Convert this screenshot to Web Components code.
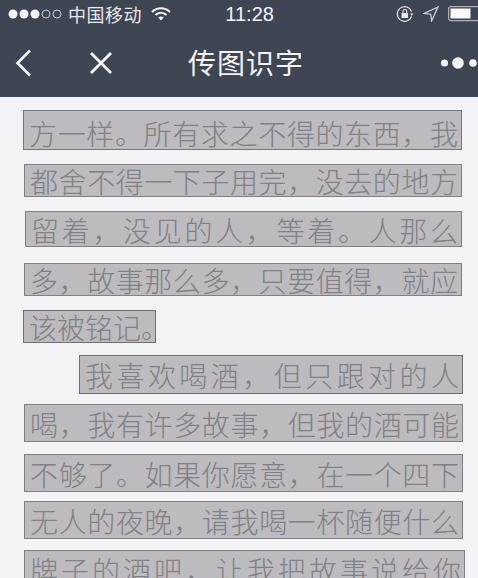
<!DOCTYPE html>
<html lang="zh">
<head>
<meta charset="utf-8">
<title>传图识字</title>
<style>
    html, body {
        margin: 0;
        height: 578px;
        overflow: hidden;
        background: #f3f2f7;
        font-family: "Noto Sans CJK SC", "Liberation Sans", sans-serif;
    }
</style>
</head>
<body>
<app-header></app-header>
<ocr-page>
    <ocr-line style="--w:439px;--h:40px;--x:23px;--t:13px;--d:3px;--b:#76767a">方一样。所有求之不得的东西&#xFF0C;我</ocr-line>
    <ocr-line style="--w:438px;--h:33px;--x:24px;--t:14px">都舍不得一下子用完&#xFF0C;没去的地方</ocr-line>
    <ocr-line style="--w:437px;--h:36px;--x:25px;--t:14px">留着&#xFF0C;没见的人&#xFF0C;等着。人那么</ocr-line>
    <ocr-line style="--w:438px;--h:33px;--x:24px;--t:16px">多&#xFF0C;故事那么多&#xFF0C;只要值得&#xFF0C;就应</ocr-line>
    <ocr-line short style="--w:133px;--h:33px;--x:23px;--t:14px;--b:#6f6f73">该被铭记。</ocr-line>
    <ocr-line style="--w:384px;--h:39px;--x:79px;--t:12px;--b:#6f6f73">我喜欢喝酒&#xFF0C;但只跟对的人</ocr-line>
    <ocr-line style="--w:439px;--h:38px;--x:24px;--t:10px">喝&#xFF0C;我有许多故事&#xFF0C;但我的酒可能</ocr-line>
    <ocr-line style="--w:439px;--h:38px;--x:24px;--t:12px">不够了。如果你愿意&#xFF0C;在一个四下</ocr-line>
    <ocr-line style="--w:439px;--h:38px;--x:24px;--t:9px">无人的夜晚&#xFF0C;请我喝一杯随便什么</ocr-line>
    <ocr-line style="--w:441px;--h:38px;--x:24px;--t:11px">牌子的酒吧&#xFF0C;让我把故事说给你</ocr-line>
</ocr-page>

<script>
class AppHeader extends HTMLElement {
    constructor() {
        super();
        this.attachShadow({ mode: 'open' });
    }

    connectedCallback() {
        this.shadowRoot.innerHTML = `
            <style>
                :host {
                    display: block;
                    height: 97px;
                    background: #3e4553;
                    color: #f4f4f6;
                    overflow: hidden;
                }
                .status {
                    height: 28px;
                    display: flex;
                    align-items: center;
                    padding-left: 8px;
                    white-space: nowrap;
                }
                .carrier { margin-left: 6px; width: 81px; font-size: 18px; letter-spacing: .5px; line-height: 28px; color: #e6e7ea; }
                .time {
                    margin-left: 54px;
                    width: 172px;
                    font-family: "Liberation Sans", sans-serif;
                    font-size: 20px;
                }
                .nav {
                    height: 69px;
                    display: flex;
                    align-items: center;
                }
                .title {
                    margin-left: 74px;
                    font-size: 28px;
                    line-height: 69px;
                    width: 115px;
                    letter-spacing: 1px;
                    white-space: nowrap;
                }
                svg { display: block; flex: none; }
            </style>
            <div class="status">
                <svg width="54" height="12" viewBox="0 0 54 12">
                    <g fill="#f4f4f6"><circle cx="5" cy="6" r="4.5"/><circle cx="16" cy="6" r="4.5"/><circle cx="27" cy="6" r="4.5"/></g>
                    <g fill="none" stroke="#c9cbd0"><circle cx="38" cy="6" r="4"/><circle cx="49" cy="6" r="4"/></g>
                </svg>
                <span class="carrier">中国移动</span>
                <svg width="20" height="14" viewBox="0 0 20 14" fill="none" stroke="#f4f4f6" stroke-width="2" style="margin-left:3px">
                    <path d="M1 5c5-5 13-5 18 0"/>
                    <path d="M4.5 8c3-3 8-3 11 0"/>
                    <path d="M10 13.5 7.2 10.6c1.6-1.4 4-1.4 5.6 0z" fill="#f4f4f6" stroke="none"/>
                </svg>
                <span class="time">11:28</span>
                <svg width="18" height="18" viewBox="0 0 18 18" fill="none" stroke="#e8e9ec" stroke-width="1.1">
                    <path d="M15.5 6.5A7.3 7.3 0 1 0 15.5 11.5"/>
                    <path d="M14 8.5h3.6l-1.8 2.2z" fill="#e8e9ec" stroke="none"/>
                    <rect x="5.6" y="8" width="6.4" height="5" rx=".6" fill="#e8e9ec" stroke="none"/>
                    <path d="M6.9 8V6.4a1.9 1.9 0 0 1 3.8 0V8"/>
                </svg>
                <svg width="16" height="16" viewBox="0 0 16 16" fill="none" stroke="#d5d7db" stroke-width="1.2" style="margin-left:9px">
                    <path d="M15 1 1 7.5l6.8.7.8 6.8z"/>
                </svg>
                <svg width="30" height="16" viewBox="0 0 30 16" style="margin-left:9px">
                    <rect x=".6" y=".6" width="35" height="14" rx="2" fill="none" stroke="#aeb0b6" stroke-width="1.2"/>
                    <rect x="2.5" y="2.5" width="20" height="10" fill="#f8f8f9"/>
                </svg>
            </div>
            <div class="nav">
                <svg width="19" height="28" viewBox="0 0 19 28" fill="none" stroke="#f6f6f8" stroke-width="2.6" style="margin-left:14px">
                    <path d="M16 1.5 3.5 14 16 26.5"/>
                </svg>
                <svg width="26" height="26" viewBox="0 0 26 26" fill="none" stroke="#f6f6f8" stroke-width="2.8" style="margin-left:55px">
                    <path d="M3 3 23 23M23 3 3 23"/>
                </svg>
                <span class="title">传图识字</span>
                <svg width="38" height="14" viewBox="0 0 38 14" fill="#f6f6f8" style="margin-left:137px">
                    <circle cx="4.5" cy="7" r="3.6"/><circle cx="18" cy="7" r="5.8"/><circle cx="33" cy="7" r="3.8"/>
                </svg>
            </div>
        `;
    }
}

class OcrPage extends HTMLElement {
    constructor() {
        super();
        this.attachShadow({ mode: 'open' });
        this.shadowRoot.innerHTML = `
            <style>
                :host {
                    display: block;
                    background: #f3f2f7;
                }
            </style>
            <slot></slot>
        `;
    }
}

class OcrLine extends HTMLElement {
    constructor() {
        super();
        this.attachShadow({ mode: 'open' });
        this.shadowRoot.innerHTML = `
            <style>
                :host {
                    display: block;
                    box-sizing: border-box;
                    width: var(--w);
                    height: var(--h);
                    margin: var(--t) 0 0 var(--x);
                    padding: var(--d, 1px) 3px 0 5px;
                    background: #bdbbc0;
                    border: 1px solid var(--b, #808084);
                    color: #808085;
                    font-size: 28px;
                    font-weight: 300;
                    line-height: calc(var(--h) - 2px);
                    white-space: nowrap;
                    text-align-last: justify;
                }
                :host([short]) { text-align-last: left; }
            </style>
            <slot></slot>
        `;
    }
}

customElements.define('app-header', AppHeader);
customElements.define('ocr-page', OcrPage);
customElements.define('ocr-line', OcrLine);
</script>
</body>
</html>
